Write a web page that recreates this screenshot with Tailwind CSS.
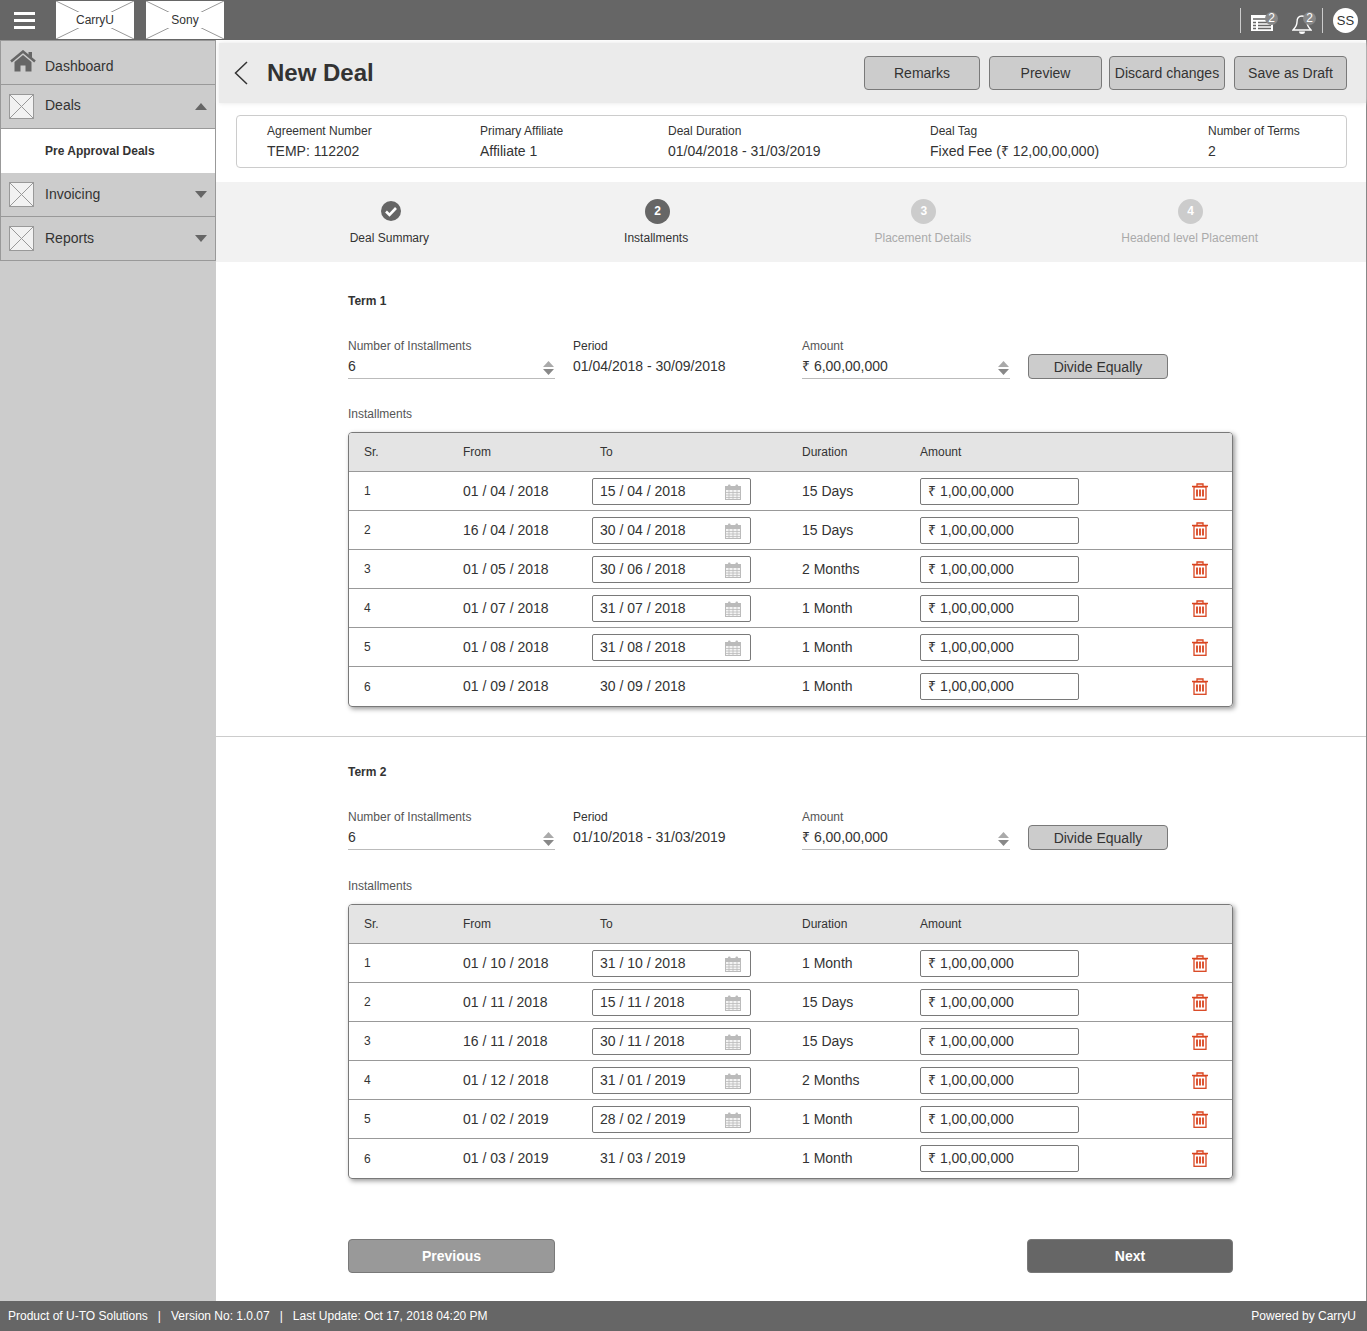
<!DOCTYPE html>
<html lang="en">
<head>
<meta charset="utf-8">
<title>New Deal</title>
<script src="https://cdn.jsdelivr.net/npm/@tailwindcss/browser@4"></script>
</head>
<body class="font-['Liberation_Sans',Arial,sans-serif] text-[#333] bg-white">
<div class="flex flex-col h-[1331px] w-full overflow-hidden">

  <header class="h-10 shrink-0 bg-[#666] flex items-center relative">
    <div class="ml-[14px] w-[21px] flex flex-col gap-[4px]">
      <span class="block h-[3px] bg-white"></span><span class="block h-[3px] bg-white"></span><span class="block h-[3px] bg-white"></span>
    </div>
    <div class="ml-[21px] relative w-[78px] h-[38px] bg-white flex items-center justify-center">
      <svg class="absolute inset-0" width="78" height="38"><path d="M0 0L78 38M78 0L0 38" stroke="#999" stroke-width="1"/></svg>
      <span class="relative bg-white px-[8px] text-[12px] leading-4">CarryU</span>
    </div>
    <div class="ml-[12px] relative w-[78px] h-[38px] bg-white flex items-center justify-center">
      <svg class="absolute inset-0" width="78" height="38"><path d="M0 0L78 38M78 0L0 38" stroke="#999" stroke-width="1"/></svg>
      <span class="relative bg-white px-[7px] text-[12px] leading-4">Sony</span>
    </div>
    <div class="ml-auto flex items-center h-full">
      <span class="w-px h-[25px] bg-[#ccc]"></span>
      <div class="relative ml-[10px] w-[28px] h-[30px]">
        <svg class="absolute left-0 top-[8px]" width="22" height="20" viewBox="0 0 22 20"><path d="M0 2h20v2h2v14H0z" fill="#fff" transform="translate(0 0)"/><path d="M2 6h18M2 9.500h3M7 9.500h13M2 12.500h3M7 12.500h13M2 15.500h3M7 15.500h13" stroke="#666" stroke-width="1.300"/></svg>
        <span class="absolute left-[14px] top-[7px] w-[13px] h-[13px] rounded-full bg-[#888] text-white text-[12px] leading-[13px] text-center">2</span>
      </div>
      <div class="relative ml-[13px] w-[28px] h-[30px]">
        <svg class="absolute left-0 top-[9px]" width="20" height="22" viewBox="0 0 20 22"><path d="M10 2C6 2 5 5 5 8c0 4-2 6-4 8h18c-2-2-4-4-4-8 0-3-1-6-5-6z" fill="none" stroke="#fff" stroke-width="1.400"/><path d="M7 17.500h6a3 2.500 0 0 1-6 0z" fill="#fff"/></svg>
        <span class="absolute left-[11px] top-[7px] w-[13px] h-[13px] rounded-full bg-[#888] text-white text-[12px] leading-[13px] text-center">2</span>
      </div>
      <span class="ml-[2px] w-px h-[25px] bg-[#ccc]"></span>
      <span class="ml-[10px] mr-[9px] w-[25px] h-[25px] rounded-full bg-white text-[#333] text-[13px] leading-[25px] text-center">SS</span>
    </div>
  </header>

  <div class="flex flex-1 min-h-0">
    <aside class="w-[216px] shrink-0 bg-[#ccc]">
      <nav class="border-x border-t border-[#999] text-[14px]">
        <div class="h-[44px] border-b border-[#999] flex items-center relative">
          <svg class="absolute left-[9px] top-[9px]" width="26" height="22" viewBox="0 0 26 22"><path d="M1 11.500L13 1.500l12 10" fill="none" stroke="#666" stroke-width="2.500"/><path d="M18.500 2h3.500v6l-3.500-3z" fill="#666"/><path d="M4.500 12L13 5l8.500 7v9.500h-6v-6h-5v6h-6z" fill="#666"/></svg>
          <span class="ml-[44px] mt-[7px]">Dashboard</span>
        </div>
        <div class="h-[44px] border-b border-[#999] flex items-center">
          <svg class="ml-[8px] shrink-0" width="26" height="26"><rect x="0.500" y="0.500" width="24" height="24" fill="#f2f2f2" stroke="#999"/><path d="M1 1L24 24M24 1L1 24" stroke="#999"/></svg>
          <span class="ml-[10px] mt-[-3px]">Deals</span>
          <svg class="ml-auto mr-[8px]" width="12" height="7"><path d="M6 0L12 7H0z" fill="#666"/></svg>
        </div>
        <div class="h-[44px] bg-white flex items-center"><span class="ml-[44px] text-[12px] font-bold">Pre Approval Deals</span></div>
        <div class="h-[44px] border-b border-[#999] flex items-center">
          <svg class="ml-[8px] shrink-0" width="26" height="26"><rect x="0.500" y="0.500" width="24" height="24" fill="#f2f2f2" stroke="#999"/><path d="M1 1L24 24M24 1L1 24" stroke="#999"/></svg>
          <span class="ml-[10px]">Invoicing</span>
          <svg class="ml-auto mr-[8px]" width="12" height="7"><path d="M0 0H12L6 7z" fill="#666"/></svg>
        </div>
        <div class="h-[44px] border-b border-[#999] flex items-center">
          <svg class="ml-[8px] shrink-0" width="26" height="26"><rect x="0.500" y="0.500" width="24" height="24" fill="#f2f2f2" stroke="#999"/><path d="M1 1L24 24M24 1L1 24" stroke="#999"/></svg>
          <span class="ml-[10px]">Reports</span>
          <svg class="ml-auto mr-[8px]" width="12" height="7"><path d="M0 0H12L6 7z" fill="#666"/></svg>
        </div>
      </nav>
    </aside>

    <main class="flex-1 min-w-0 border-r border-[#888] flex flex-col">
      <div class="h-[60px] shrink-0 bg-[#ebebeb] shadow-[0_0_5px_#e6e6e6] ml-[3px] mt-[3px] mb-[-3px] flex items-center">
        <svg class="ml-[15px]" width="14" height="24" viewBox="0 0 14 24"><path d="M13 1L1.500 12 13 23" fill="none" stroke="#333" stroke-width="1.500"/></svg>
        <h1 class="ml-[19px] text-[24px] leading-8 font-bold">New Deal</h1>
        <div class="ml-auto mr-[19px] flex text-[14px]">
          <button class="w-[116px] h-[34px] bg-[#ccc] border border-[#797979] rounded-[4px]">Remarks</button>
          <button class="ml-[9px] w-[113px] h-[34px] bg-[#ccc] border border-[#797979] rounded-[4px]">Preview</button>
          <button class="ml-[7px] w-[116px] h-[34px] bg-[#ccc] border border-[#797979] rounded-[4px]">Discard changes</button>
          <button class="ml-[9px] w-[113px] h-[34px] bg-[#ccc] border border-[#797979] rounded-[4px]">Save as Draft</button>
        </div>
      </div>

      <section class="mt-[15px] ml-[20px] mr-[19px] h-[53px] shrink-0 border border-[#ccc] rounded-[4px] pl-[30px] pt-[7px] grid grid-cols-[213px_188px_262px_278px_1fr]">
        <div><p class="text-[12px] leading-4">Agreement Number</p><p class="mt-[2px] text-[14px] leading-5">TEMP: 112202</p></div>
        <div><p class="text-[12px] leading-4">Primary Affiliate</p><p class="mt-[2px] text-[14px] leading-5">Affiliate 1</p></div>
        <div><p class="text-[12px] leading-4">Deal Duration</p><p class="mt-[2px] text-[14px] leading-5">01/04/2018 - 31/03/2019</p></div>
        <div><p class="text-[12px] leading-4">Deal Tag</p><p class="mt-[2px] text-[14px] leading-5">Fixed Fee (₹ 12,00,00,000)</p></div>
        <div><p class="text-[12px] leading-4">Number of Terms</p><p class="mt-[2px] text-[14px] leading-5">2</p></div>
      </section>

      <section class="mt-[14px] h-[80px] shrink-0 bg-[#f2f2f2] pl-[40px] pr-[43px] grid grid-cols-4 text-[12px] text-center">
        <div class="flex flex-col items-center pt-[17px]">
          <svg class="ml-[4px]" width="24" height="24" viewBox="0 0 24 24"><circle cx="12" cy="12" r="10" fill="#666"/><path d="M7 12.500l3.500 3.500 6.500-7" fill="none" stroke="#fff" stroke-width="2.600"/></svg>
          <span class="mt-[7px] leading-4">Deal Summary</span>
        </div>
        <div class="flex flex-col items-center pt-[17px]">
          <span class="ml-[3px] w-[25px] h-[25px] rounded-full bg-[#666] text-white font-bold leading-[24px] text-[12px]">2</span>
          <span class="mt-[6px] leading-4">Installments</span>
        </div>
        <div class="flex flex-col items-center pt-[17px] text-[#aaa]">
          <span class="ml-[2px] w-[25px] h-[25px] rounded-full bg-[#ccc] text-white font-bold leading-[24px]">3</span>
          <span class="mt-[6px] leading-4">Placement Details</span>
        </div>
        <div class="flex flex-col items-center pt-[17px] text-[#aaa]">
          <span class="ml-[2px] w-[25px] h-[25px] rounded-full bg-[#ccc] text-white font-bold leading-[24px]">4</span>
          <span class="mt-[6px] leading-4">Headend level Placement</span>
        </div>
      </section>

      <div id="terms"></div>

      <div class="mt-[60px] ml-[132px] w-[885px] flex justify-between text-[14px] font-bold text-white">
        <button class="w-[207px] h-[34px] bg-[#999] border border-[#797979] rounded-[4px]">Previous</button>
        <button class="w-[206px] h-[34px] bg-[#666] border border-[#797979] rounded-[4px]">Next</button>
      </div>
    </main>
  </div>

  <footer class="h-[30px] shrink-0 bg-[#666] text-white text-[12px] flex items-center justify-between pl-[8px] pr-[11px]">
    <span class="whitespace-pre">Product of U-TO Solutions   |   Version No: 1.0.07   |   Last Update: Oct 17, 2018 04:20 PM</span>
    <span>Powered by CarryU</span>
  </footer>
</div>

<script>
const arrows = `<svg width="11" height="14" viewBox="0 0 11 14"><path d="M5.500 0L11 6H0z" fill="#aaa"/><path d="M0 8h11L5.500 14z" fill="#888"/></svg>`;
const cal = `<svg class="absolute right-[9px] top-[5px]" width="16" height="16" viewBox="0 0 16 16"><rect x="0.500" y="2.500" width="15" height="13" fill="#f4f4f4" stroke="#bbb"/><rect x="1" y="3" width="14" height="3" fill="#bbb"/><path d="M1 8.500h14M1 11h14M1 13.500h14M4 6v9M8 6v9M12 6v9" stroke="#bbb" stroke-width="0.800"/><rect x="3" y="0.500" width="2.500" height="4" rx="1" fill="#bbb"/><rect x="10.500" y="0.500" width="2.500" height="4" rx="1" fill="#bbb"/></svg>`;
const trash = `<svg class="ml-[113px]" width="16" height="17" viewBox="0 0 16 17"><path d="M0 3.500h16M5 3.500V1h6v2.500" fill="none" stroke="#d9441f" stroke-width="1.300"/><rect x="2" y="4" width="12" height="12.300" fill="#fff" stroke="#d9441f" stroke-width="1.300"/><path d="M5 6.500v7M8 6.500v7M11 6.500v7" stroke="#d9441f" stroke-width="1.800"/></svg>`;

function row(i, r, last) {
  const toCell = last
    ? `<span class="pl-[8px]">${r[1]}</span>`
    : `<div class="relative w-[159px] h-[27px] border border-[#797979] rounded-[2px] pl-[7px] leading-[25px]">${r[1]}${cal}</div>`;
  return `<div class="h-[39px] ${last ? '' : 'border-b border-[#999]'} pl-[15px] grid grid-cols-[99px_129px_210px_118px_159px_1fr] items-center text-[14px]">
    <span class="text-[12px]">${i + 1}</span>
    <span>${r[0]}</span>
    ${toCell}
    <span>${r[2]}</span>
    <div class="w-[159px] h-[27px] border border-[#797979] rounded-[2px] pl-[7px] leading-[25px]">₹ 1,00,00,000</div>
    ${trash}
  </div>`;
}

function term(name, period, rows, second) {
  return `<section class="${second ? 'pt-[27px] pb-0' : 'pt-[31px] pb-[29px] border-b border-[#ccc]'} pl-[132px]">
    <h2 class="text-[12px] leading-4 font-bold">${name}</h2>
    <div class="mt-[29px] flex items-end">
      <div class="w-[207px] border-b border-[#bbb] pb-[2px]">
        <p class="text-[12px] leading-4 text-[#555]">Number of Installments</p>
        <div class="mt-[2px] h-5 flex items-center justify-between pr-px text-[14px]"><span>6</span><span class="mt-[3px]">${arrows}</span></div>
      </div>
      <div class="ml-[18px] w-[229px] pb-[2px] self-start">
        <p class="text-[12px] leading-4">Period</p>
        <p class="mt-[2px] text-[14px] leading-5">${period}</p>
      </div>
      <div class="w-[208px] border-b border-[#bbb] pb-[2px]">
        <p class="text-[12px] leading-4 text-[#555]">Amount</p>
        <div class="mt-[2px] h-5 flex items-center justify-between pr-px text-[14px]"><span>₹ 6,00,00,000</span><span class="mt-[3px]">${arrows}</span></div>
      </div>
      <button class="ml-[18px] w-[140px] h-[25px] bg-[#ccc] border border-[#797979] rounded-[4px] text-[14px] leading-none">Divide Equally</button>
    </div>
    <p class="${second ? 'mt-[28px]' : 'mt-[27px]'} text-[12px] leading-4 text-[#555]">Installments</p>
    <div class="mt-[10px] w-[885px] border border-[#797979] rounded-[4px] shadow-[2px_2px_5px_#999] overflow-hidden">
      <div class="h-[39px] bg-[#e4e4e4] border-b border-[#999] pl-[15px] grid grid-cols-[99px_129px_210px_118px_159px_1fr] items-center text-[12px]">
        <span>Sr.</span><span>From</span><span class="pl-[8px]">To</span><span>Duration</span><span>Amount</span><span></span>
      </div>
      ${rows.map((r, i) => row(i, r, i === rows.length - 1)).join('')}
    </div>
  </section>`;
}

const t1 = [
  ['01 / 04 / 2018','15 / 04 / 2018','15 Days'],
  ['16 / 04 / 2018','30 / 04 / 2018','15 Days'],
  ['01 / 05 / 2018','30 / 06 / 2018','2 Months'],
  ['01 / 07 / 2018','31 / 07 / 2018','1 Month'],
  ['01 / 08 / 2018','31 / 08 / 2018','1 Month'],
  ['01 / 09 / 2018','30 / 09 / 2018','1 Month']
];
const t2 = [
  ['01 / 10 / 2018','31 / 10 / 2018','1 Month'],
  ['01 / 11 / 2018','15 / 11 / 2018','15 Days'],
  ['16 / 11 / 2018','30 / 11 / 2018','15 Days'],
  ['01 / 12 / 2018','31 / 01 / 2019','2 Months'],
  ['01 / 02 / 2019','28 / 02 / 2019','1 Month'],
  ['01 / 03 / 2019','31 / 03 / 2019','1 Month']
];
document.getElementById('terms').innerHTML =
  term('Term 1', '01/04/2018 - 30/09/2018', t1, false) +
  term('Term 2', '01/10/2018 - 31/03/2019', t2, true);
</script>
</body>
</html>
